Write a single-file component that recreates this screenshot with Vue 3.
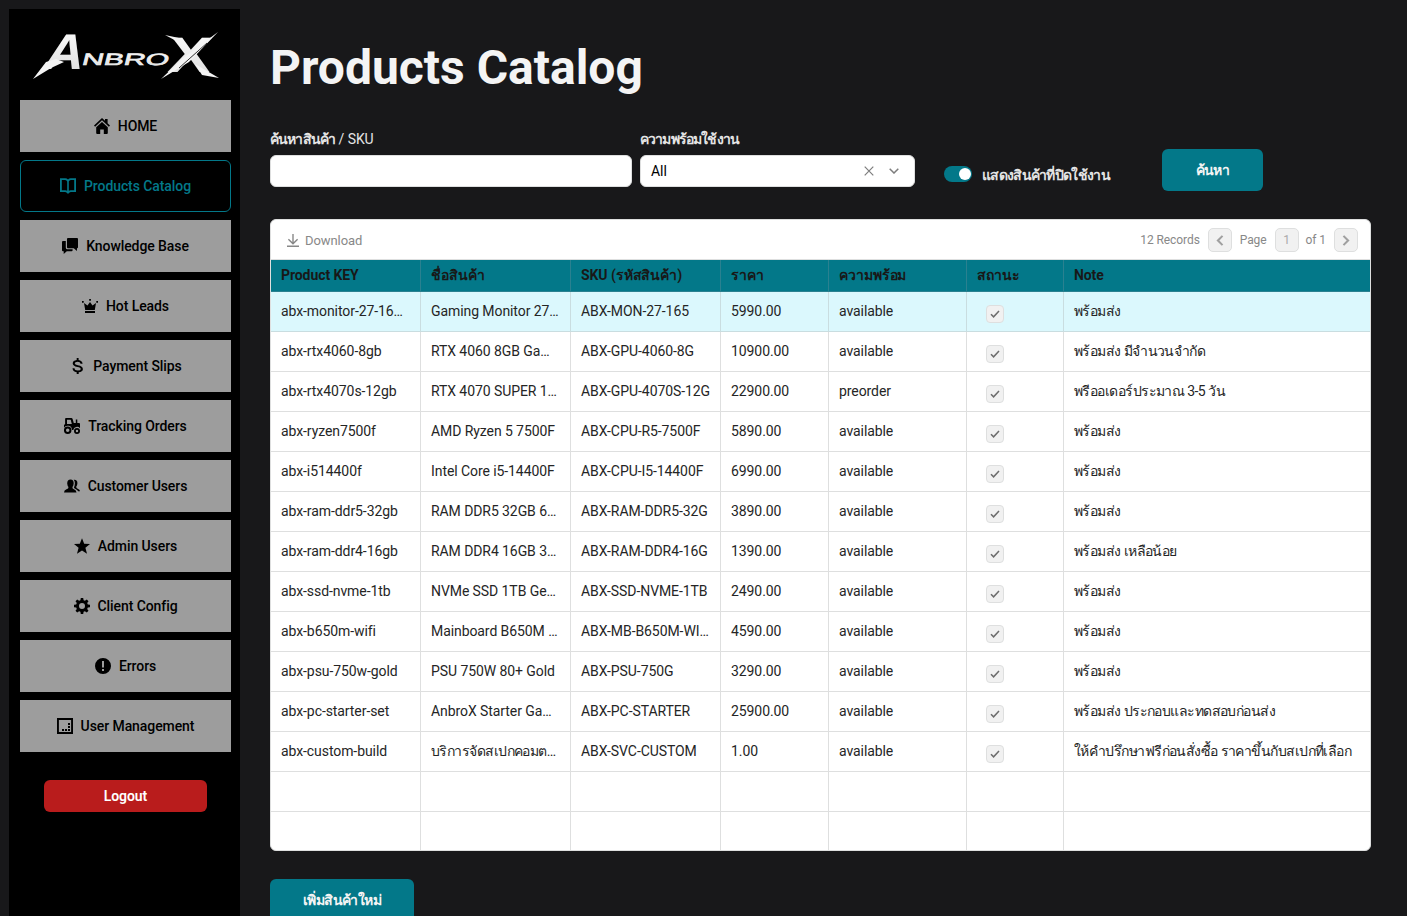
<template>
  <div class="layout">
    <aside class="sidebar">
      <svg class="logo" viewBox="0 0 190 52" role="img" aria-label="AnbroX">
        <defs>
          <linearGradient id="metal" x1="0" y1="0" x2="0" y2="1">
            <stop offset="0" stop-color="#ffffff" />
            <stop offset="1" stop-color="#d9d9d9" />
          </linearGradient>
        </defs>
        <g class="logo-text" fill="url(#metal)">
          <text transform="translate(11 39) skewX(-15)" font-size="50" textLength="39" lengthAdjust="spacingAndGlyphs">A</text>
          <text class="logo-mid" transform="translate(50 35) skewX(-14)" font-size="16.5" textLength="87" lengthAdjust="spacingAndGlyphs">NBRO</text>
          <text transform="translate(136 42) skewX(-6)" font-size="50" textLength="43" lengthAdjust="spacingAndGlyphs">X</text>
        </g>
        <g fill="#f4f4f4">
          <path d="M2 49 15 32 25 29 33 32 20 38Z" />
          <path d="M130 49 152 28 187 2 158 32Z" />
          <path d="M134 5 148 8 155 16Z" />
          <path d="M164 34 188 48 171 45Z" />
        </g>
        <path d="M148 38 176 13" stroke="#000" stroke-width=".8" />
      </svg>

      <nav class="menu">
        <button
          v-for="item in menu"
          :key="item.label"
          class="menu-btn"
          :class="{ active: item.active }"
        >
          <svg class="menu-icon" viewBox="0 0 16 16" fill="currentColor">
            <path :d="item.icon" fill-rule="evenodd" />
          </svg>
          <span>{{ item.label }}</span>
        </button>
      </nav>

      <button class="logout-btn">Logout</button>
    </aside>

    <main class="content">
      <h1 class="title">Products Catalog</h1>

      <div class="filters">
        <div class="field field-search">
          <label for="search"><span class="thai-label">ค้นหาสินค้า</span> / SKU</label>
          <input id="search" v-model="keyword" class="input" type="text" />
        </div>
        <div class="field field-select">
          <label><span class="thai-label">ความพร้อมใช้งาน</span></label>
          <div class="input select">
            <span>All</span>
            <svg class="clear" viewBox="0 0 10 10"><path d="M.7.7l8.6 8.6M9.3.7L.7 9.3" /></svg>
            <svg class="caret" viewBox="0 0 10 6"><path d="M.7.7L5 5 9.3.7" /></svg>
          </div>
        </div>
        <div class="switch-wrap">
          <span class="switch" :class="{ on: showDisabled }" @click="showDisabled = !showDisabled"></span>
          <span class="switch-label thai-label">แสดงสินค้าที่ปิดใช้งาน</span>
        </div>
        <button class="btn search-btn">ค้นหา</button>
      </div>

      <section class="table-box">
        <div class="toolbar">
          <div class="download">
            <svg viewBox="0 0 12 13"><path d="M6 0v9.5M1.4 5.2L6 9.8l4.6-4.6M0 12.3h12" /></svg>
            <span>Download</span>
          </div>
          <div class="pager">
            <span class="records">12 Records</span>
            <span class="page-btn"><svg viewBox="0 0 7 10"><path d="M5.8.8L1.6 5l4.2 4.2" /></svg></span>
            <span class="page-text">Page</span>
            <span class="page-btn">1</span>
            <span class="page-of">of 1</span>
            <span class="page-btn"><svg viewBox="0 0 7 10"><path d="M1.2.8L5.4 5 1.2 9.2" /></svg></span>
          </div>
        </div>

        <div class="row head">
          <div v-for="col in columns" :key="col" class="cell">{{ col }}</div>
        </div>
        <div
          v-for="(row, i) in rows"
          :key="row[0]"
          class="row"
          :class="{ selected: i === 0 }"
        >
          <div v-for="(value, j) in row" :key="j" class="cell" :class="{ thai: isThai(value) }">
            <span v-if="value === true" class="check">
              <svg viewBox="0 0 10 8"><path d="M1 4.2l2.6 2.6L9 1" /></svg>
            </span>
            <template v-else>{{ value }}</template>
          </div>
        </div>
        <div v-for="n in 2" :key="'empty' + n" class="row">
          <div v-for="col in columns" :key="col" class="cell"></div>
        </div>
      </section>

      <button class="btn add-btn">เพิ่มสินค้าใหม่</button>
    </main>
  </div>
</template>

<script setup>
import { ref } from 'vue'

const keyword = ref('')
const showDisabled = ref(true)

const isThai = (value) => /[\u0E00-\u0E7F]/.test(value)

const menu = [
  {
    label: 'HOME',
    icon: 'M8 0l3 2.8V1h2.6v4.2L16 7.5l-1.1 1.2L8 2.3 1.1 8.7 0 7.5zM8 3.9l5.8 5.3V15q0 1-1 1H9.8v-4.6H6.2V16h-3q-1 0-1-1V9.2z',
  },
  {
    label: 'Products Catalog',
    active: true,
    icon: 'M0 .3h5.2Q7 .3 8 1.4 9 .3 10.8 .3H16V14h-5.2q-1.6 0-2.1 1.6H7.3Q6.8 14 5.2 14H0zM1.8 2v10.3h3.5q1.1 0 1.9.5V3.6Q6.7 2 5.1 2zM14.2 2h-3.3Q9.3 2 8.8 3.6v9.2q.8-.5 1.9-.5h3.5z',
  },
  {
    label: 'Knowledge Base',
    icon: 'M6 0h9q1 0 1 1v8.3q0 1-1 1l-.1 2.7-3.1-2.7H6q-1 0-1-1V1q0-1 1-1zM1 3h2.8v6.8q0 1.5 1.5 1.5h5.3v1q0 1-1 1H4.8L1.7 16v-2.7H1q-1 0-1-1V4q0-1 1-1z',
  },
  {
    label: 'Hot Leads',
    icon: 'M7.2 1h1.7v1.7H7.2zM0 3h1.7v1.7H0zM14.3 3H16v1.7h-1.7zM8 4l2.5 3.4 3.5-2.3-1.2 6.9H3.2L2 5.1l3.5 2.3zM3 13h10v1.9H3z',
  },
  {
    label: 'Payment Slips',
    icon: 'M7.7 0h1.9v2q3.500.4 4 3.800h-2Q11.200 3.700 8.700 3.700 5.900 3.700 5.700 5.300 5.700 6.700 8.900 7.300 13.900 8.200 13.900 11.200 13.700 13.800 9.700 14.200V16H7.700v-1.800Q3.700 13.800 3.500 10.300h2Q5.700 12.500 8.700 12.500q3 0 3.100-1.500 0-1.500-3.400-2.100Q3.700 8 3.700 5.200 3.900 2.600 7.700 2z',
  },
  {
    label: 'Tracking Orders',
    icon: 'M2 0h5.300q1 0 1.300 1l1.200 4h2V1.500h1.500V5H15q1 0 1 1v4.200A3.800 3.800 0 0 0 9.300 12H8A4.300 4.300 0 0 0 0 9.800V7l1.100-1V1q0-1 .9-1zM3 1.800V6h4.800L6.700 1.800zM3.700 8.500a3.700 3.700 0 1 1 0 7.500 3.700 3.700 0 0 1 0-7.500zm0 2a1.700 1.700 0 1 0 0 3.500 1.700 1.700 0 0 0 0-3.500zM13 10a3 3 0 1 1 0 6 3 3 0 0 1 0-6zm0 1.800a1.200 1.200 0 1 0 0 2.400 1.200 1.200 0 0 0 0-2.400z',
  },
  {
    label: 'Customer Users',
    icon: 'M6.500 1.600Q9.800 1.600 9.700 5.500 9.500 7.900 8.400 9q-.2 1.800 1.600 2.300 2.300.7 2.500 3.200H0q0-2.500 2.500-3.200Q4.600 10.800 4.500 9 3.400 7.900 3.200 5.500 3.200 1.600 6.500 1.600zM9.700 1.700q3.900-.4 3.700 3.700-.1 2-1.200 3.300 0 1.500 1.500 2 2.200.7 2.300 2.500l-1.900.1q-.6-1.700-2.600-2.400Q10 10.300 9.900 9.200q.9-1.200 1-3.900Q10.900 3 9.700 1.700z',
  },
  {
    label: 'Admin Users',
    icon: 'M8 .2l2.200 5.600 5.800.3-4.600 3.700 1.600 6L8 12.600 3 15.800l1.600-6L0 6.100l5.800-.3z',
  },
  {
    label: 'Client Config',
    icon: 'M6.800 0h2.400l.4 2.200 1.300.6 1.900-1.300 1.700 1.700-1.300 1.900.6 1.300 2.200.4v2.400l-2.200.4-.6 1.300 1.300 1.900-1.700 1.700-1.900-1.300-1.300.6L9.200 16H6.800l-.4-2.200-1.300-.6-1.900 1.300-1.700-1.700 1.300-1.900-.6-1.300L0 9.200V6.800l2.200-.4.6-1.300-1.300-1.900 1.700-1.700 1.900 1.300 1.300-.6zM8 5a3 3 0 1 0 0 6 3 3 0 0 0 0-6z',
  },
  {
    label: 'Errors',
    icon: 'M8 0a8 8 0 1 1 0 16A8 8 0 0 1 8 0zM7 3v6.500h2V3zM7 11v2h2v-2z',
  },
  {
    label: 'User Management',
    icon: 'M0 0h16v16H0zM1.900 1.900v12.200h12.200V1.900zM11 5h2v2h-2zM11 8h2v2h-2zM11 11h2v2h-2zM8 11h2v2H8zM5 11h2v2H5z',
  },
]

const columns = ['Product KEY', 'ชื่อสินค้า', 'SKU (รหัสสินค้า)', 'ราคา', 'ความพร้อม', 'สถานะ', 'Note']

const rows = [
  ['abx-monitor-27-165hz', 'Gaming Monitor 27 165Hz', 'ABX-MON-27-165', '5990.00', 'available', true, 'พร้อมส่ง'],
  ['abx-rtx4060-8gb', 'RTX 4060 8GB Gaming', 'ABX-GPU-4060-8G', '10900.00', 'available', true, 'พร้อมส่ง มีจำนวนจำกัด'],
  ['abx-rtx4070s-12gb', 'RTX 4070 SUPER 12GB', 'ABX-GPU-4070S-12G', '22900.00', 'preorder', true, 'พรีออเดอร์ประมาณ 3-5 วัน'],
  ['abx-ryzen7500f', 'AMD Ryzen 5 7500F', 'ABX-CPU-R5-7500F', '5890.00', 'available', true, 'พร้อมส่ง'],
  ['abx-i514400f', 'Intel Core i5-14400F', 'ABX-CPU-I5-14400F', '6990.00', 'available', true, 'พร้อมส่ง'],
  ['abx-ram-ddr5-32gb', 'RAM DDR5 32GB 6000', 'ABX-RAM-DDR5-32G', '3890.00', 'available', true, 'พร้อมส่ง'],
  ['abx-ram-ddr4-16gb', 'RAM DDR4 16GB 3200', 'ABX-RAM-DDR4-16G', '1390.00', 'available', true, 'พร้อมส่ง เหลือน้อย'],
  ['abx-ssd-nvme-1tb', 'NVMe SSD 1TB Gen4', 'ABX-SSD-NVME-1TB', '2490.00', 'available', true, 'พร้อมส่ง'],
  ['abx-b650m-wifi', 'Mainboard B650M WiFi', 'ABX-MB-B650M-WIFI6', '4590.00', 'available', true, 'พร้อมส่ง'],
  ['abx-psu-750w-gold', 'PSU 750W 80+ Gold', 'ABX-PSU-750G', '3290.00', 'available', true, 'พร้อมส่ง'],
  ['abx-pc-starter-set', 'AnbroX Starter Gaming', 'ABX-PC-STARTER', '25900.00', 'available', true, 'พร้อมส่ง ประกอบและทดสอบก่อนส่ง'],
  ['abx-custom-build', 'บริการจัดสเปกคอมตามงบ', 'ABX-SVC-CUSTOM', '1.00', 'available', true, 'ให้คำปรึกษาฟรีก่อนสั่งซื้อ ราคาขึ้นกับสเปกที่เลือก'],
]
</script>

<style>
body {
  background: #18181a;
  overflow: hidden;
}
</style>

<style scoped>
.layout {
  display: flex;
  height: 916px;
  padding: 9px 0 0 9px;
  box-sizing: border-box;
  overflow: hidden;
  font-family: Roboto, 'Liberation Sans', sans-serif;
  font-size: 14px;
  letter-spacing: -0.08px;
  background: #18181a;
}

button {
  font-family: inherit;
  letter-spacing: inherit;
  border: none;
  padding: 0;
}

/* sidebar */
.sidebar {
  flex: none;
  width: 231px;
  box-sizing: border-box;
  padding: 21px 9px 0 11px;
  background: #000;
  display: flex;
  flex-direction: column;
  align-items: center;
}

.logo {
  width: 190px;
  height: 52px;
  flex: none;
  margin-bottom: 18px;
  overflow: visible;
}

.logo-text {
  font-family: 'Liberation Sans', sans-serif;
  font-weight: 700;
  letter-spacing: 0;
}

.logo-mid {
  font-weight: 400;
  stroke: #eee;
  stroke-width: 0.6;
}

.menu {
  width: 100%;
  display: flex;
  flex-direction: column;
  gap: 8px;
}

.menu-btn {
  display: flex;
  align-items: center;
  justify-content: center;
  gap: 8px;
  height: 52px;
  background: #9d9d9d;
  color: #000;
  font-size: 14px;
  font-weight: 500;
}

.menu-btn.active {
  background: #000;
  color: #037889;
  border: 1px solid #037889;
  border-radius: 6px;
}

.menu-icon {
  width: 16px;
  height: 16px;
}

.logout-btn {
  flex: none;
  width: 163px;
  height: 32px;
  margin-top: 28px;
  border-radius: 6px;
  background: #b91c1c;
  color: #fff;
  font-size: 14px;
  font-weight: 600;
}

/* content */
.content {
  flex: 1;
  min-width: 0;
  padding: 22px 36px 0 30px;
}

.title {
  margin: 0;
  height: 72px;
  line-height: 74px;
  font-size: 48px;
  font-weight: 700;
  letter-spacing: 0;
  color: #f4f4f4;
}

.filters {
  display: flex;
  height: 116px;
}

.field {
  padding-top: 26px;
  color: #e4e4e4;
}

.field label {
  display: block;
  height: 26px;
  line-height: 20px;
  white-space: nowrap;
}

.thai-label {
  font-weight: 600;
  letter-spacing: -0.85px;
}

.field-search {
  width: 362px;
  margin-right: 8px;
}

.field-select {
  width: 275px;
}

.input {
  display: block;
  width: 100%;
  height: 32px;
  box-sizing: border-box;
  border: 1px solid #dedfdf;
  border-radius: 6px;
  background: #fff;
  color: #000;
}

.select {
  display: flex;
  align-items: center;
  padding: 0 15px 0 10px;
}

.select span {
  flex: 1;
}

.select svg {
  width: 10px;
  fill: none;
  stroke: #7d7d7d;
  stroke-width: 1.2;
}

.select .caret {
  margin-left: 15px;
  stroke-width: 1.5;
}

.switch-wrap {
  display: flex;
  width: 218px;
  height: 16px;
  margin: 63px 0 0 29px;
}

.switch {
  flex: none;
  width: 28px;
  height: 16px;
  padding: 2px;
  box-sizing: border-box;
  border-radius: 8px;
  background: #777;
}

.switch::after {
  content: '';
  display: block;
  width: 12px;
  height: 12px;
  border-radius: 50%;
  background: #fff;
}

.switch.on {
  background: #037889;
}

.switch.on::after {
  margin-left: 13px;
}

.switch-label {
  margin-left: 10px;
  line-height: 18px;
  color: #e4e4e4;
  letter-spacing: -0.7px;
  white-space: nowrap;
}

.btn {
  border-radius: 6px;
  background: #037889;
  color: #f4f4f4;
  font-size: 14px;
  font-weight: 600;
  letter-spacing: -0.6px;
}

.search-btn {
  width: 101px;
  height: 42px;
  margin: 46px 0 0 0;
}

.add-btn {
  display: block;
  width: 144px;
  height: 42px;
  margin-top: 28px;
}

/* table */
.table-box {
  height: 632px;
  box-sizing: border-box;
  border: 1px solid #dedfdf;
  border-radius: 6px;
  background: #fff;
  overflow: hidden;
}

.toolbar {
  display: flex;
  align-items: center;
  justify-content: space-between;
  height: 40px;
  box-sizing: border-box;
  padding: 1px 12px 0 16px;
  border-bottom: 1px solid #dedfdf;
  color: #888;
  font-size: 13px;
}

.download {
  display: flex;
  align-items: center;
  gap: 6px;
}

.download span {
  padding-top: 1px;
}

.download svg {
  width: 12px;
  height: 13px;
  fill: none;
  stroke: #888;
  stroke-width: 1.4;
}

.pager {
  display: flex;
  align-items: center;
  font-size: 12px;
}

.records {
  margin-right: 8px;
}

.page-text {
  margin: 0 8px;
}

.page-of {
  margin: 0 8px 0 7px;
}

.page-btn {
  display: flex;
  align-items: center;
  justify-content: center;
  width: 24px;
  height: 24px;
  box-sizing: border-box;
  border: 1px solid #dedfdf;
  border-radius: 5px;
  background: #f1f1f1;
  color: #aaa;
}

.page-btn svg {
  width: 8px;
  height: 11px;
  fill: none;
  stroke: #a0a0a0;
  stroke-width: 1.9;
}

.row {
  display: grid;
  grid-template-columns: 150px 150px 150px 108px 138px 97px 1fr;
  height: 40px;
}

.cell {
  box-sizing: border-box;
  padding: 0 9px 0 10px;
  line-height: 39px;
  border-right: 1px solid #dedfdf;
  border-bottom: 1px solid #dedfdf;
  color: #252525;
  white-space: nowrap;
  overflow: hidden;
  text-overflow: ellipsis;
}

.cell:first-child {
  padding-right: 10px;
}

.cell.thai {
  letter-spacing: -0.55px;
}

.cell:last-child {
  border-right: none;
}

.row.selected {
  background: #dbf8fd;
}

.row.selected .cell {
  border-color: #c9dde0;
}

.row.head {
  height: 32px;
  background: #037889;
}

.head .cell {
  line-height: 31px;
  font-weight: 700;
  color: #181818;
  border-color: #2a8190;
}

.check {
  display: flex;
  align-items: center;
  justify-content: center;
  width: 18px;
  height: 18px;
  box-sizing: border-box;
  margin: 13px 0 0 9px;
  border: 1px solid #dedfdf;
  border-radius: 4px;
  background: #f1f1f1;
}

.check svg {
  width: 10px;
  height: 8px;
  fill: none;
  stroke: #6c6c6c;
  stroke-width: 1.5;
}
</style>
